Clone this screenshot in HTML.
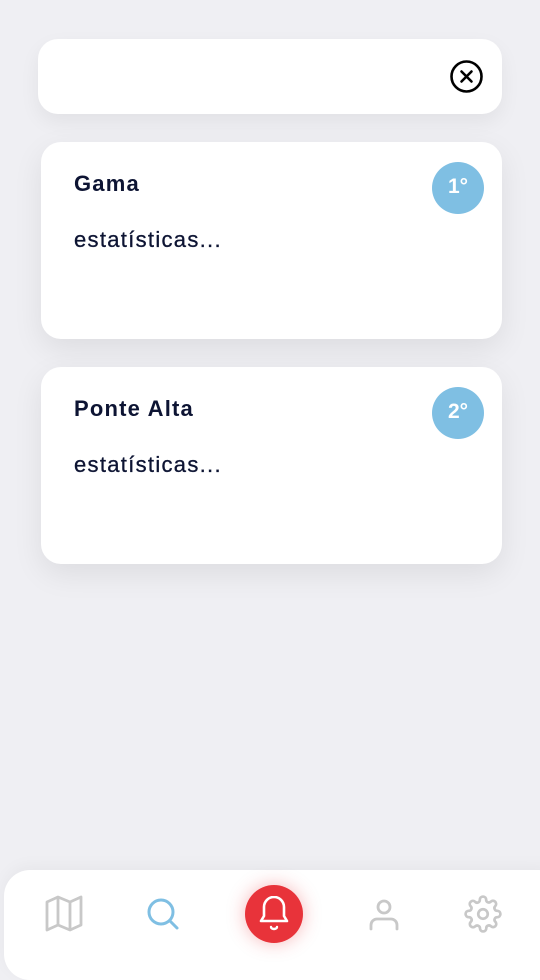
<!DOCTYPE html>
<html><head><meta charset="utf-8"><style>
body{margin:0;width:540px;height:961px;background:#efeff3;font-family:"Liberation Sans",sans-serif;position:relative;overflow:hidden}
.search{position:absolute;left:38px;top:39px;width:464px;height:75px;background:#fff;border-radius:20px;box-shadow:0 8px 20px rgba(0,0,0,.06)}
.card{position:absolute;left:41px;width:461px;height:197px;background:#fff;border-radius:20px;box-shadow:0 10px 30px rgba(0,0,0,.08)}
.card h2{position:absolute;left:33px;top:29px;margin:0;font-size:22px;font-weight:bold;color:#0d1433;letter-spacing:1.2px}
.card p{position:absolute;left:33px;top:85px;margin:0;font-size:22px;color:#0d1433;letter-spacing:1.3px;-webkit-text-stroke:.3px #0d1433}
.badge{position:absolute;right:18px;top:20px;width:52px;height:52px;border-radius:50%;background:#7fbfe3;color:#fff;font-size:21px;font-weight:bold;text-align:center;line-height:50px}
.nav{position:absolute;left:4px;top:870px;width:560px;height:110px;background:#fff;border-radius:26px;box-shadow:0 -4px 16px rgba(0,0,0,.04)}
.bell{position:absolute;left:245px;top:885px;width:58px;height:58px;border-radius:50%;background:#e8333a;box-shadow:0 0 18px rgba(232,51,58,.35)}
svg{position:absolute}
</style></head><body>
<div class="search"></div>
<svg style="left:449px;top:59px" width="35" height="35" viewBox="0 0 35 35"><circle cx="17.5" cy="17.5" r="15" fill="none" stroke="#000" stroke-width="2.6"/><path d="M12.5 12.5l10 10M22.5 12.5l-10 10" stroke="#000" stroke-width="2.6" stroke-linecap="round"/></svg>
<div class="card" style="top:142px"><h2>Gama</h2><p>estatísticas...</p><div class="badge">1°</div></div>
<div class="card" style="top:367px"><h2>Ponte Alta</h2><p>estatísticas...</p><div class="badge">2°</div></div>
<div class="nav"></div>
<svg style="left:44px;top:895px" width="40" height="38" viewBox="0 0 40 38"><path d="M3 7l11-5 12 5 11-5v28l-11 5-12-5-11 5z M14 2v28 M26 7v28" fill="none" stroke="#c8c8c8" stroke-width="2.8" stroke-linejoin="round"/></svg>
<svg style="left:145px;top:896px" width="36" height="36" viewBox="0 0 36 36"><circle cx="16" cy="16" r="12" fill="none" stroke="#7fbfe3" stroke-width="3"/><path d="M25 25l7 7" stroke="#7fbfe3" stroke-width="3" stroke-linecap="round"/></svg>
<div class="bell"></div>
<svg style="left:257px;top:896px" width="34" height="36" viewBox="0 0 34 36"><path d="M4 25h26l-3-5V11a10 10 0 0 0-20 0v9z" fill="none" stroke="#fff" stroke-width="2.6" stroke-linejoin="round"/><path d="M14 31a3 2 0 0 0 6 0" fill="none" stroke="#fff" stroke-width="2.4" stroke-linecap="round"/></svg>
<svg style="left:366px;top:896px" width="36" height="36" viewBox="0 0 36 36"><circle cx="18" cy="11" r="6" fill="none" stroke="#c8c8c8" stroke-width="2.8"/><path d="M5 33v-4a6 6 0 0 1 6-6h14a6 6 0 0 1 6 6v4" fill="none" stroke="#c8c8c8" stroke-width="2.8" stroke-linecap="round"/></svg>
<svg style="left:464px;top:895px" width="38" height="38" viewBox="0 0 24 24"><circle cx="12" cy="12" r="3" fill="none" stroke="#c8c8c8" stroke-width="1.7"/><path d="M19.4 15a1.65 1.65 0 0 0 .33 1.82l.06.06a2 2 0 1 1-2.830 2.83l-.06-.06a1.65 1.65 0 0 0-1.82-.33 1.65 1.65 0 0 0-1 1.51V21a2 2 0 1 1-4 0v-.09A1.650 1.65 0 0 0 9 19.4a1.65 1.65 0 0 0-1.82.33l-.06.06a2 2 0 1 1-2.83-2.83l.06-.06A1.65 1.65 0 0 0 4.68 15a1.65 1.65 0 0 0-1.51-1H3a2 2 0 1 1 0-4h.09A1.65 1.65 0 0 0 4.6 9a1.65 1.65 0 0 0-.33-1.82l-.06-.06a2 2 0 1 1 2.83-2.83l.06.06A1.65 1.65 0 0 0 9 4.68 1.65 1.65 0 0 0 10 3.17V3a2 2 0 1 1 4 0v.09a1.65 1.65 0 0 0 1 1.51 1.65 1.65 0 0 0 1.82-.33l.06-.06a2 2 0 1 1 2.83 2.83l-.06.06A1.65 1.65 0 0 0 19.4 9a1.65 1.65 0 0 0 1.51 1H21a2 2 0 1 1 0 4h-.09a1.65 1.65 0 0 0-1.51 1z" fill="none" stroke="#c8c8c8" stroke-width="1.7"/></svg>
</body></html>
